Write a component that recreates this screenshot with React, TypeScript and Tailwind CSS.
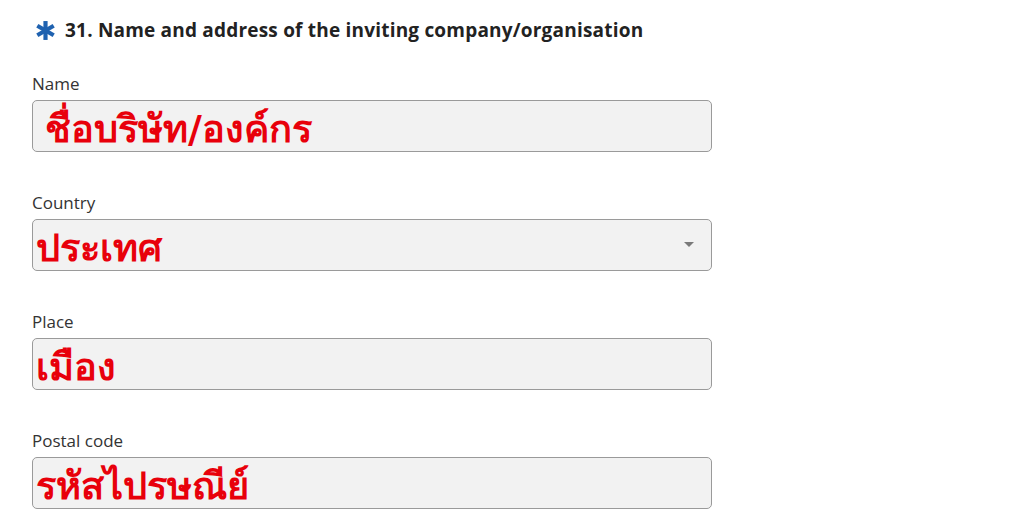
import React from 'react';

const fields = [
  { label: 'Name', value: 'ชื่อบริษัท/องค์กร', select: false, indent: 'pl-[12px]' },
  { label: 'Country', value: 'ประเทศ', select: true, indent: 'pl-[3px]' },
  { label: 'Place', value: 'เมือง', select: false, indent: 'pl-[3px]' },
  { label: 'Postal code', value: 'รหัสไปรษณีย์', select: false, indent: 'pl-[3px]' },
];

export default function App() {
  return (
    <div className="w-[1024px] h-[529px] bg-white overflow-hidden pl-[32px] pt-[17px] font-['Open_Sans',sans-serif] text-[#333]">
      <div className="flex items-center h-[26px]">
        <svg className="w-[21px] h-[21px] ml-[3px] mr-[9px]" viewBox="0 0 20 20">
          <g stroke="#1f62b0" strokeWidth="4" strokeLinecap="butt">
            <line x1="10" y1="1" x2="10" y2="19" />
            <line x1="2.2" y1="5.5" x2="17.8" y2="14.5" />
            <line x1="2.2" y1="14.5" x2="17.8" y2="5.5" />
          </g>
        </svg>
        <h2 className="text-[19px] font-bold text-[#222] tracking-[0.2px]">31. Name and address of the inviting company/organisation</h2>
      </div>

      <div className="mt-[30px] flex flex-col gap-[40px]">
        {fields.map((f) => (
          <div key={f.label} className="w-[680px]">
            <label className="block text-[17px] leading-[22px] mb-[5px] text-[#333]">{f.label}</label>
            <div className="relative h-[52px] bg-[#f2f2f2] border border-[#9a9a9a] rounded-[5px] flex items-center">
              <span
                className={`${f.indent} text-[#e8000b] font-bold text-[38px] leading-none whitespace-nowrap font-['Tahoma','DejaVu_Sans','Noto_Sans',sans-serif] mt-[6px]`}
              >
                {f.value}
              </span>
              {f.select && (
                <span className="absolute right-[17px] top-[22px] w-0 h-0 border-l-[5px] border-r-[5px] border-t-[5px] border-l-transparent border-r-transparent border-t-[#7a7a7a]" />
              )}
            </div>
          </div>
        ))}
      </div>
    </div>
  );
}
